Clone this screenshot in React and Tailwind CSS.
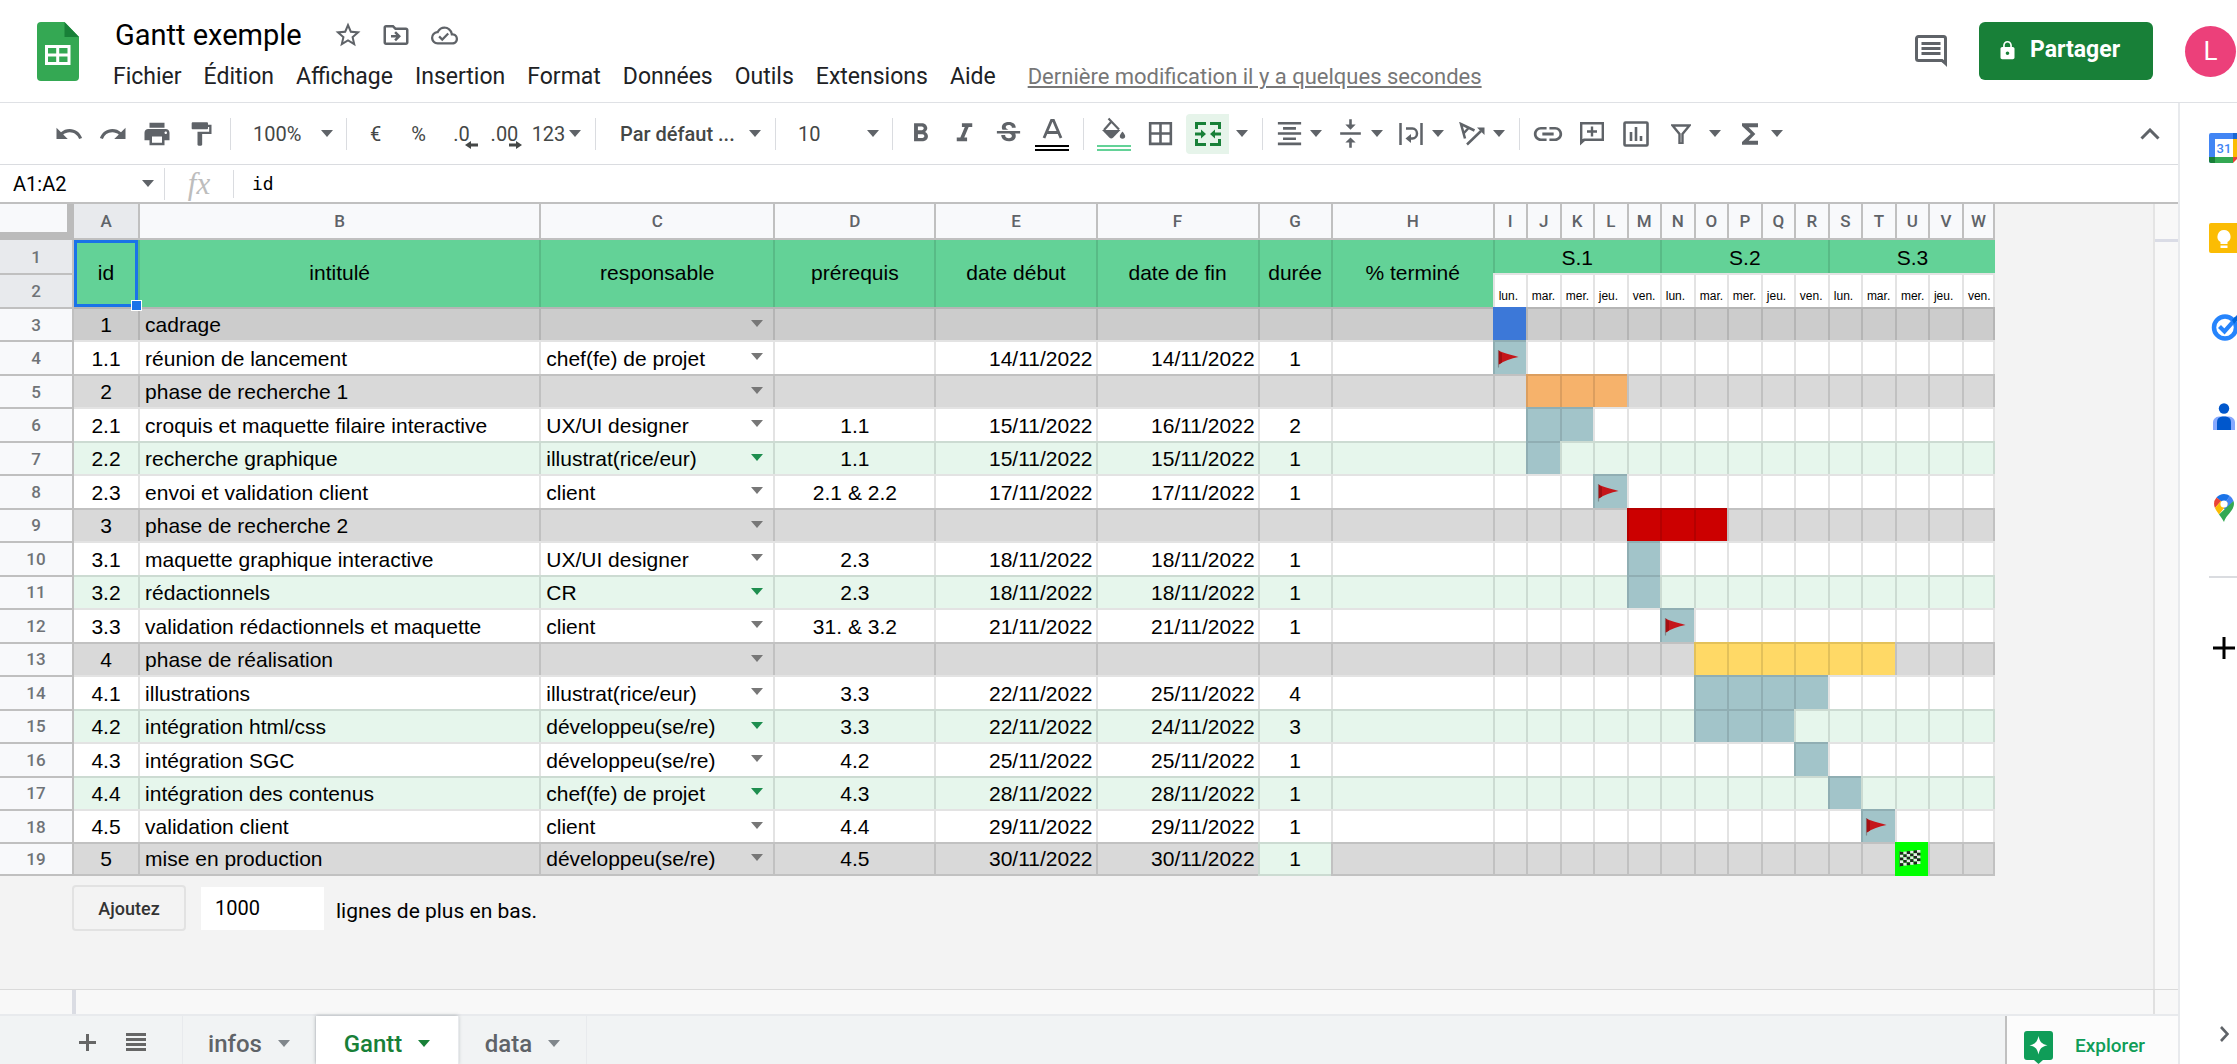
import React from "react";
import {
  MdUndo, MdRedo, MdPrint, MdFormatPaint, MdFormatBold, MdFormatItalic, MdStrikethroughS,
  MdBorderAll, MdFormatAlignCenter, MdVerticalAlignCenter, MdLink,
  MdFunctions, MdStarBorder, MdOutlineDriveFileMove, MdOutlineCloudDone, MdLock,
} from "react-icons/md";

const MENUS = ["Fichier", "Édition", "Affichage", "Insertion", "Format", "Données", "Outils", "Extensions", "Aide"];
const LETTERS = "ABCDEFGHIJKLMNOPQRSTUVW".split("");
const DAYS = ["lun.", "mar.", "mer.", "jeu.", "ven."];
const HEADINGS = ["intitulé", "responsable", "prérequis", "date début", "date de fin", "durée", "% terminé"];

const T = "bg-[#a2c4c9]";
// k: p = phase, w = white, g = banded green ; bar = [first day, length, colour, marker]
const ROWS = [
  { k: "p3", c: ["1", "cadrage", "", "", "", "", ""], bar: [0, 1, "bg-[#3c78d8]"] },
  { k: "w", c: ["1.1", "réunion de lancement", "chef(fe) de projet", "", "14/11/2022", "14/11/2022", "1"], bar: [0, 1, T, "flag"] },
  { k: "p", c: ["2", "phase de recherche 1", "", "", "", "", ""], bar: [1, 3, "bg-[#f6b26b]"] },
  { k: "w", c: ["2.1", "croquis et maquette filaire interactive", "UX/UI designer", "1.1", "15/11/2022", "16/11/2022", "2"], bar: [1, 2, T] },
  { k: "g", c: ["2.2", "recherche graphique", "illustrat(rice/eur)", "1.1", "15/11/2022", "15/11/2022", "1"], bar: [1, 1, T] },
  { k: "w", c: ["2.3", "envoi et validation client", "client", "2.1 & 2.2", "17/11/2022", "17/11/2022", "1"], bar: [3, 1, T, "flag"] },
  { k: "p", c: ["3", "phase de recherche 2", "", "", "", "", ""], bar: [4, 3, "bg-[#cc0000]"] },
  { k: "w", c: ["3.1", "maquette graphique interactive", "UX/UI designer", "2.3", "18/11/2022", "18/11/2022", "1"], bar: [4, 1, T] },
  { k: "g", c: ["3.2", "rédactionnels", "CR", "2.3", "18/11/2022", "18/11/2022", "1"], bar: [4, 1, T] },
  { k: "w", c: ["3.3", "validation rédactionnels et maquette", "client", "31. & 3.2", "21/11/2022", "21/11/2022", "1"], bar: [5, 1, T, "flag"] },
  { k: "p", c: ["4", "phase de réalisation", "", "", "", "", ""], bar: [6, 6, "bg-[#ffd966]"] },
  { k: "w", c: ["4.1", "illustrations", "illustrat(rice/eur)", "3.3", "22/11/2022", "25/11/2022", "4"], bar: [6, 4, T] },
  { k: "g", c: ["4.2", "intégration html/css", "développeu(se/re)", "3.3", "22/11/2022", "24/11/2022", "3"], bar: [6, 3, T] },
  { k: "w", c: ["4.3", "intégration SGC", "développeu(se/re)", "4.2", "25/11/2022", "25/11/2022", "1"], bar: [9, 1, T] },
  { k: "g", c: ["4.4", "intégration des contenus", "chef(fe) de projet", "4.3", "28/11/2022", "28/11/2022", "1"], bar: [10, 1, T] },
  { k: "w", c: ["4.5", "validation client", "client", "4.4", "29/11/2022", "29/11/2022", "1"], bar: [11, 1, T, "flag"] },
  { k: "p", c: ["5", "mise en production", "développeu(se/re)", "4.5", "30/11/2022", "30/11/2022", "1"], bar: [12, 1, "bg-[#00ff00]", "finish"] },
];
const BG = { p3: "bg-[#cccccc]", p: "bg-[#d9d9d9]", w: "bg-white", g: "bg-[#e6f6ec]" };

function Caret({ className = "text-[#5f6368]" }) {
  return (
    <svg viewBox="0 0 12 7" className={"h-[7px] w-3 shrink-0 " + className} fill="currentColor" aria-hidden="true">
      <path d="M0 0h12L6 7z" />
    </svg>
  );
}

function Sep({ className = "" }) {
  return <div className={"h-8 w-px shrink-0 bg-[#dadce0] " + className} />;
}

function Tool({ label, w = "w-11", children }) {
  return (
    <button type="button" aria-label={label} className={"flex h-10 shrink-0 items-center justify-center " + w}>
      {children}
    </button>
  );
}

function IconWithCaret({ label, children }) {
  return (
    <div className="mr-[7px] flex shrink-0">
      <Tool label={label} w="w-[34px]">{children}</Tool>
      <Tool label={label + " : options"} w="w-5"><Caret /></Tool>
    </div>
  );
}

function Decimal({ text, right }) {
  return (
    <span className="relative">
      {text}
      <svg viewBox="0 0 13 8" className={"absolute top-[22px] h-2 w-[13px] " + (right ? "-right-1" : "-right-2")} fill="currentColor">
        {right ? <path d="M0 2.500h7V0l6 4-6 4V5.500H0z" /> : <path d="M13 2.500H6V0L0 4l6 4V5.500h7z" />}
      </svg>
    </span>
  );
}

function Flag() {
  return (
    <svg viewBox="0 0 22 19" className="h-[19px] w-[22px]" aria-label="drapeau rouge">
      <path d="M1.500 1v17.500" stroke="#7d8b8d" strokeWidth="1.200" />
      <path d="M1.800 1.500C6 4.500 13 5 21.500 8 14 9.500 7 12 1.800 15.500z" fill="#c5161a" />
      <path d="M1.800 1.500C3 3 4 4 5 4.300v9.200L1.800 15.500z" fill="#a30f12" />
    </svg>
  );
}

function Finish() {
  const cells = [];
  for (let r = 0; r < 5; r++) {
    for (let c = 0; c < 6; c++) {
      cells.push(
        <rect key={r + "-" + c} x={1 + c * 3.4} y={3 + r * 2.8 - c * 0.4} width="3.400" height="2.800" fill={(r + c) % 2 ? "#e8e8e8" : "#222"} />
      );
    }
  }
  return (
    <svg viewBox="0 0 22 19" className="h-[19px] w-[22px]" aria-label="drapeau à damier">
      <path d="M1 2v16" stroke="#555" strokeWidth="1" />
      {cells}
    </svg>
  );
}

function Header() {
  return (
    <header className="flex h-[103px] items-start border-b border-[#dfe1e5] bg-white">
      <svg viewBox="0 0 42 59" className="mt-[22px] ml-[37px] h-[59px] w-[42px] shrink-0" aria-label="Sheets">
        <path d="M4 0h23.500L42 15v40a4 4 0 0 1-4 4H4a4 4 0 0 1-4-4V4a4 4 0 0 1 4-4z" fill="#34a853" />
        <path d="M27.500 0L42 15H27.500z" fill="#188038" />
        <path d="M8 23h25.500v20H8zM11 26v5.500h8.200V26zm11.200 0v5.500h8.300V26zM11 34.500V40h8.200v-5.500zm11.200 0V40h8.300v-5.500z" fill="#fff" fillRule="evenodd" />
      </svg>
      <div className="ml-[34px] shrink-0 pt-[15px]">
        <div className="flex h-10 items-center">
          <h1 className="pl-[2px] text-[29px] leading-10 text-black">Gantt exemple</h1>
          <div className="ml-[31px] flex items-center gap-[18px] text-[30px] text-[#5f6368]">
            <button type="button" aria-label="Suivre"><MdStarBorder /></button>
            <button type="button" aria-label="Déplacer"><MdOutlineDriveFileMove /></button>
            <button type="button" aria-label="État du document" className="ml-[2px] text-[27px]"><MdOutlineCloudDone /></button>
          </div>
        </div>
        <nav className="mt-[8px] flex items-center gap-[22px] text-[23px] leading-7 text-[#202124]">
          {MENUS.map((m) => <button type="button" key={m}>{m}</button>)}
          <a href="#historique" className="ml-[10px] text-[22px] text-[#777] underline underline-offset-2">Dernière modification il y a quelques secondes</a>
        </nav>
      </div>
      <div className="mt-[22px] ml-auto flex shrink-0 items-center">
        <button type="button" aria-label="Commentaires" className="mr-8 text-[#5f6368]">
          <svg viewBox="0 0 32 32" className="h-8 w-8" fill="none" stroke="currentColor" strokeWidth="3">
            <path d="M30.500 28V3.500a2 2 0 0 0-2-2h-25a2 2 0 0 0-2 2v20a2 2 0 0 0 2 2H27z" />
            <path d="M26 26h6v6z" fill="currentColor" stroke="none" />
            <path d="M6.500 8.500h19M6.500 13.500h19M6.500 18.500h19" />
          </svg>
        </button>
        <button type="button" className="flex h-[58px] w-[174px] items-center rounded-md bg-[#188038] pb-[2px] pl-[18px] text-[23px] font-bold text-white">
          <MdLock className="mr-[9px] text-[21px]" />
          <span className="pl-[3px]">Partager</span>
        </button>
        <button type="button" aria-label="Compte" className="mr-px ml-8 h-[51px] w-[51px] rounded-full bg-[#ec407a] text-[26px] text-white">L</button>
      </div>
    </header>
  );
}

function Toolbar() {
  return (
    <div role="toolbar" className="flex h-[62px] items-center border-b border-[#dadce0] pr-3 pl-[47px] text-[20px] text-[#444746]">
      <div className="flex shrink-0 text-[30px] text-[#5f6368]">
        <Tool label="Annuler"><MdUndo /></Tool>
        <Tool label="Rétablir"><MdRedo /></Tool>
        <Tool label="Imprimer"><MdPrint /></Tool>
        <Tool label="Copier la mise en forme"><MdFormatPaint className="text-[28px]" /></Tool>
      </div>
      <Sep className="ml-[7px]" />
      <button type="button" className="flex w-[115px] shrink-0 items-center justify-between pr-[13px] pl-[22px]">100%<Caret /></button>
      <Sep className="mr-[7px]" />
      <Tool label="Format monétaire" w="w-[43px]">€</Tool>
      <Tool label="Pourcentage" w="w-[43px]">%</Tool>
      <Tool label="Réduire les décimales" w="w-[43px]"><Decimal text=".0" /></Tool>
      <Tool label="Ajouter des décimales" w="w-[43px]"><Decimal text=".00" right /></Tool>
      <Tool label="Autres formats" w="w-[61px]"><span className="mr-1">123</span><Caret /></Tool>
      <Sep className="ml-2" />
      <button type="button" className="flex w-[179px] shrink-0 items-center justify-between pr-[14px] pl-6 font-medium">Par défaut ...<Caret /></button>
      <Sep />
      <div className="flex w-[116px] shrink-0 items-center pr-[13px] pl-[22px]">
        <input aria-label="Taille de police" defaultValue="10" className="w-full min-w-0 bg-transparent" />
        <Caret />
      </div>
      <Sep className="mr-[5px]" />
      <div className="flex shrink-0 text-[31px] text-[#5f6368]">
        <Tool label="Gras"><MdFormatBold /></Tool>
        <Tool label="Italique"><MdFormatItalic /></Tool>
        <Tool label="Barré"><MdStrikethroughS /></Tool>
        <Tool label="Couleur du texte">
          <svg viewBox="0 0 34 34" className="h-[34px] w-[34px]" fill="none">
            <path d="M9 21L16.500 3.500h2L26 21M11.500 15.500h12" stroke="currentColor" strokeWidth="2.800" />
            <path d="M0 29h34M0 33h34" stroke="#000" strokeWidth="2" />
          </svg>
        </Tool>
      </div>
      <Sep className="mr-2 ml-[9px]" />
      <div className="flex shrink-0 items-center text-[31px] text-[#5f6368]">
        <Tool label="Couleur de remplissage">
          <svg viewBox="0 0 34 34" className="h-[34px] w-[34px]">
            <path d="M11.500 1.500L22 12.500M14.500 4.500L7 13" stroke="currentColor" strokeWidth="2.200" fill="none" />
            <path d="M5 13h18.500l-7.500 7.800c-1 1-2.500 1-3.500 0z" fill="currentColor" />
            <path d="M25.500 14.500s-2.700 3-2.700 4.600a2.700 2.700 0 0 0 5.400 0c0-1.600-2.700-4.600-2.700-4.600z" fill="currentColor" />
            <path d="M0 29h34M0 33h34" stroke="#63d297" strokeWidth="2" />
          </svg>
        </Tool>
        <Tool label="Bordures" w="w-[48px]"><MdBorderAll /></Tool>
        <button type="button" aria-label="Fusionner les cellules" className="ml-[2px] flex h-10 w-[43px] items-center justify-center rounded-l bg-[#e6f4ea] text-[#188038]">
          <svg viewBox="0 0 26 24" className="h-6 w-[26px]" fill="none" stroke="currentColor" strokeWidth="3">
            <path d="M1.500 7V1.500H11M15 1.500h9.500V7M1.500 17v5.500H11M15 22.500h9.500V17M0 12h6M26 12h-6" />
            <path d="M6 7.500l5 4.500-5 4.500zM20 7.500L15 12l5 4.500z" fill="currentColor" stroke="none" />
          </svg>
        </button>
        <Tool label="Options de fusion" w="w-[26px]"><Caret /></Tool>
      </div>
      <Sep className="mr-[9px] ml-[7px]" />
      <div className="flex shrink-0 text-[31px] text-[#5f6368]">
        <IconWithCaret label="Alignement horizontal"><MdFormatAlignCenter /></IconWithCaret>
        <IconWithCaret label="Alignement vertical"><MdVerticalAlignCenter /></IconWithCaret>
        <IconWithCaret label="Retour à la ligne">
          <svg viewBox="0 0 24 24" className="h-6 w-6" fill="none" stroke="currentColor" strokeWidth="2.500">
            <path d="M1.500 1v22M22.500 1v22M7 6.500h6.500a4.500 5 0 0 1 0 10H11" />
            <path d="M12 12v9l-5.500-4.500z" fill="currentColor" stroke="none" />
          </svg>
        </IconWithCaret>
        <IconWithCaret label="Rotation du texte">
          <svg viewBox="0 0 28 24" className="h-6 w-7" fill="none" stroke="currentColor" strokeWidth="2.500">
            <path d="M7 16.500L3 2l13.500 6.500M5.500 11.500L11 5.500M9 22.500L23 9" />
            <path d="M19 5.500h7.500V13z" fill="currentColor" stroke="none" />
          </svg>
        </IconWithCaret>
      </div>
      <Sep className="mr-[6px] ml-[3px]" />
      <div className="flex shrink-0 text-[34px] text-[#5f6368]">
        <Tool label="Insérer un lien"><MdLink /></Tool>
        <Tool label="Insérer un commentaire">
          <svg viewBox="0 0 24 24" className="h-6 w-6" fill="none" stroke="currentColor" strokeWidth="2.400">
            <path d="M1.200 20V1.200h21.600v16.500H4zM12 4.500v10M7 9.500h10" />
            <path d="M0 17h7l-7 6.500z" fill="currentColor" stroke="none" />
          </svg>
        </Tool>
        <Tool label="Insérer un graphique">
          <svg viewBox="0 0 26 26" className="h-[26px] w-[26px]" fill="none" stroke="currentColor" strokeWidth="2.600">
            <rect x="1.500" y="1.500" width="23" height="23" rx="1" />
            <path d="M8 11v9M13 6v14M18 15v5" />
          </svg>
        </Tool>
        <Tool label="Filtre" w="w-[46px]">
          <svg viewBox="0 0 20 20" className="h-5 w-5" fill="none" stroke="currentColor" strokeWidth="2.400">
            <path d="M1.500 1.500h17L11.500 10v9.500h-3V10z" />
          </svg>
        </Tool>
        <Tool label="Vues filtrées" w="w-[22px]"><Caret /></Tool>
        <div className="ml-2 flex text-[32px]">
          <Tool label="Fonctions" w="w-8"><MdFunctions /></Tool>
          <Tool label="Liste des fonctions" w="w-[22px]"><Caret /></Tool>
        </div>
      </div>
      <button type="button" aria-label="Masquer les menus" className="ml-auto flex h-10 w-8 items-center justify-center text-[#5f6368]">
        <svg viewBox="0 0 20 12" className="h-3 w-5" fill="none" stroke="currentColor" strokeWidth="3">
          <path d="M1.500 10.500L10 2l8.500 8.500" />
        </svg>
      </button>
    </div>
  );
}

function FormulaBar() {
  return (
    <div className="flex h-[39px] items-center border-b-2 border-[#c0c0c0] text-[20px] text-black">
      <input aria-label="Zone de nom" defaultValue="A1:A2" className="w-[129px] pl-[13px]" />
      <button type="button" aria-label="Plages" className="flex w-[35px] items-center justify-center pr-[10px] pl-[13px]"><Caret /></button>
      <div className="h-8 w-px bg-[#dadce0]" />
      <span className="w-[68px] text-center font-['Liberation_Serif',serif] text-[31px] leading-8 text-[#bdbdbd] italic">fx</span>
      <div className="h-7 w-px bg-[#dadce0]" />
      <input aria-label="Formule" defaultValue="id" className="min-w-0 flex-1 pl-[18px] font-['DejaVu_Sans_Mono',monospace] text-[18px]" />
    </div>
  );
}

const LINE = "border-t-2 border-l-2 border-black/11";

function RowNumber({ n }) {
  return (
    <th
      scope="row"
      className={
        "h-[33px] border-r-2 border-[#c0c0c0] p-0 font-['Roboto',sans-serif] text-[17px] font-medium text-[#6f7377] " +
        (n > 1 ? "border-t-2 " : "") + (n === 19 ? "border-b-2 " : "") + (n < 3 ? "bg-[#e8eaed]" : "bg-[#f8f9fb]")
      }
    >
      {n}
    </th>
  );
}

function Sheet() {
  return (
    <table className="h-[672px] w-[1995px] table-fixed border-separate border-spacing-0 font-['Liberation_Sans',Arial,sans-serif] text-[21px] leading-6 text-black">
      <colgroup>
        <col className="w-[74px]" />
        <col className="w-[64px]" />
        <col className="w-[401px]" />
        <col className="w-[234px]" />
        <col className="w-[161px]" />
        <col className="w-[161px]" />
        <col className="w-[162px]" />
        <col className="w-[73px]" />
        <col className="w-[162px]" />
        {DAYS.concat(DAYS, DAYS).map((_, i) => <col key={i} className={i % 2 ? "w-[34px]" : "w-[33px]"} />)}
      </colgroup>
      <thead className="font-['Roboto',sans-serif] text-[17px] text-[#5f6368]">
        <tr>
          <th aria-label="Tout sélectionner" className="h-9 border-r-[7px] border-b-8 border-[#bbbbbb] bg-[#f8f9fb] p-0" />
          {LETTERS.map((l, i) => (
            <th key={l} scope="col" className={"border-b-2 border-[#c0c0c0] p-0 font-medium " + (i === 0 ? "bg-[#e8eaed] " : "border-l-2 bg-[#f8f9fb] ") + (i === 22 ? "border-r-2" : "")}>{l}</th>
          ))}
        </tr>
      </thead>
      <tbody>
        <tr>
          <RowNumber n={1} />
          <th rowSpan={2} className="relative bg-[#63d297] p-0 font-normal">
            id
            <span className="absolute inset-0 border-3 border-[#1a73e8]" />
            <span className="absolute -right-1 -bottom-1 h-[11px] w-[11px] border border-white bg-[#1a73e8]" />
          </th>
          {HEADINGS.map((h) => (
            <th key={h} rowSpan={2} className="border-l-2 border-black/11 bg-[#63d297] p-0 font-normal">{h}</th>
          ))}
          {["S.1", "S.2", "S.3"].map((s) => (
            <th key={s} colSpan={5} className="border-l-2 border-black/11 bg-[#63d297] p-0 pb-[3px] align-bottom font-normal">{s}</th>
          ))}
        </tr>
        <tr>
          <RowNumber n={2} />
          {DAYS.concat(DAYS, DAYS).map((d, i) => (
            <td key={i} className={"overflow-hidden bg-white p-0 pb-1 pl-1 align-bottom text-[12px] leading-[14px] " + LINE + (i === 14 ? " border-r-2" : "")}>{d}</td>
          ))}
        </tr>
        {ROWS.map((row, r) => {
          const bg = BG[row.k];
          const last = r === ROWS.length - 1;
          const cell = LINE + " p-0 pb-[3px] align-bottom whitespace-nowrap " + (last ? "border-b-2 " : "");
          const [id, title, who, pre, start, end, len] = row.c;
          const [first, count, color, mark] = row.bar;
          return (
            <tr key={id}>
              <RowNumber n={r + 3} />
              <td className={"border-t-2 border-black/11 p-0 pb-[3px] text-center align-bottom " + (last ? "border-b-2 " : "") + bg}>{id}</td>
              <td className={cell + bg}><div className="pl-[5px]">{title}</div></td>
              <td className={cell + bg}>
                <div className="flex h-6 items-center justify-between pr-[10px] pl-[5px]">
                  <span>{who}</span>
                  <button type="button" aria-label={"Choisir le responsable, ligne " + (r + 3)} className="flex h-5 items-center self-start">
                    <Caret className={row.k === "g" ? "text-[#1e8e4f]" : "text-[#777]"} />
                  </button>
                </div>
              </td>
              <td className={cell + "text-center " + bg}>{pre}</td>
              <td className={cell + "text-right " + bg}><div className="pr-[3px]">{start}</div></td>
              <td className={cell + "text-right " + bg}><div className="pr-[3px]">{end}</div></td>
              <td className={cell + "text-center " + (last ? "bg-[#e6f6ec]" : bg)}>{len}</td>
              <td className={cell + bg} />
              {Array.from({ length: 15 }, (_, d) => {
                const on = d >= first && d < first + count;
                const plain = on && (r === 0 || last);
                return (
                  <td
                    key={d}
                    className={
                      "p-0 pb-[3px] align-bottom border-t-2 border-l-2 " + (plain ? "border-transparent " : "border-black/11 ") +
                      (last ? "border-b-2 " : "") + (on ? color : bg) + (d === 14 ? " border-r-2" : "")
                    }
                  >
                    {on && mark === "flag" && <div className="pb-[3px] pl-[2px]"><Flag /></div>}
                    {on && mark === "finish" && <div className="pb-[3px] pl-[2px]"><Finish /></div>}
                  </td>
                );
              })}
            </tr>
          );
        })}
      </tbody>
    </table>
  );
}

function SheetTab({ name, active, w }) {
  return (
    <button
      type="button"
      role="tab"
      aria-selected={!!active}
      className={"flex items-center justify-center gap-4 pt-2 text-[24px] font-medium " + w + (active ? " bg-white text-[#188038] shadow-[0_0_4px_rgba(60,64,67,0.4)]" : " border-x border-[#e8eaed] text-[#5f6368]")}
    >
      {name}
      <Caret className={"mb-[2px] " + (active ? "text-[#188038]" : "text-[#80868b]")} />
    </button>
  );
}

function Footer() {
  return (
    <footer className="flex h-[50px] items-stretch border-t-2 border-[#e8eaed] bg-[#f1f3f4]">
      <button type="button" aria-label="Ajouter une feuille" className="ml-[71px] flex w-8 items-center justify-center pt-1 text-[#666]">
        <svg viewBox="0 0 17 17" className="h-[17px] w-[17px]" stroke="currentColor" strokeWidth="3"><path d="M0 8.500h17M8.500 0v17" /></svg>
      </button>
      <button type="button" aria-label="Toutes les feuilles" className="ml-[17px] flex w-8 items-center justify-center pt-1 text-[#666]">
        <svg viewBox="0 0 20 18" className="h-[18px] w-5" stroke="currentColor" strokeWidth="3"><path d="M0 1.500h20M0 6.500h20M0 11.500h20M0 16.500h20" /></svg>
      </button>
      <div role="tablist" className="ml-[30px] flex">
        <SheetTab name="infos" w="w-[134px]" />
        <SheetTab name="Gantt" active w="w-[142px]" />
        <SheetTab name="data" w="w-[129px]" />
      </div>
      <button type="button" className="ml-auto flex w-[173px] items-center border-l-2 border-[#c0c0c0] bg-[#fcfcfc] pl-[17px] text-[19px] font-medium text-[#0f9d58]">
        <svg viewBox="0 0 29 33" className="mt-[14px] h-[33px] w-[29px]">
          <path d="M3 0h23a3 3 0 0 1 3 3v23a3 3 0 0 1-3 3h-7l-4.500 4-4.500-4H3a3 3 0 0 1-3-3V3a3 3 0 0 1 3-3z" fill="#0f9d58" />
          <path d="M14.500 5c1.300 6 3.200 8 9 9.300-5.800 1.300-7.700 3.200-9 9.200-1.300-6-3.200-7.900-9-9.200C11.300 13 13.200 11 14.500 5z" fill="#fff" />
        </svg>
        <span className="mt-3 ml-[22px]">Explorer</span>
      </button>
    </footer>
  );
}

function SidePanel() {
  return (
    <aside className="flex w-[59px] shrink-0 flex-col overflow-hidden border-l-2 border-[#e8eaed] bg-white pt-[30px] pl-[29px]">
      <button type="button" aria-label="Agenda" className="h-[30px] w-[30px]">
        <svg viewBox="0 0 30 30" className="h-[30px] w-[30px]">
          <path d="M2 0h22v6H6v24H2a2 2 0 0 1-2-2V2a2 2 0 0 1 2-2z" fill="#4285f4" />
          <path d="M24 0h4a2 2 0 0 1 2 2v4h-6z" fill="#1967d2" />
          <path d="M24 6h6v18h-6z" fill="#fbbc04" />
          <path d="M6 24h18v6H6z" fill="#34a853" />
          <path d="M0 24h6v6H2a2 2 0 0 1-2-2z" fill="#188038" />
          <path d="M24 24h6l-6 6z" fill="#ea4335" />
          <path d="M6 6h18v18H6z" fill="#fff" />
          <text x="15" y="20" textAnchor="middle" fontSize="13" fontWeight="500" fontFamily="Roboto" fill="#4285f4">31</text>
        </svg>
      </button>
      <button type="button" aria-label="Keep" className="mt-[60px] h-[30px] w-[30px]">
        <svg viewBox="0 0 30 30" className="h-[30px] w-[30px]">
          <rect width="30" height="30" rx="2" fill="#fbbc04" />
          <path d="M15 7a6.500 6.500 0 0 0-3.500 12v2h7v-2A6.500 6.500 0 0 0 15 7zM11.500 22.500h7V25h-7z" fill="#fff" />
        </svg>
      </button>
      <button type="button" aria-label="Tasks" className="mt-[60px] ml-[2px] h-7 w-7">
        <svg viewBox="0 0 28 28" className="h-7 w-7" fill="none">
          <circle cx="14" cy="14.500" r="11" stroke="#2684fc" strokeWidth="4.500" />
          <path d="M8.500 13.500l5 5L25 5.500" stroke="#2684fc" strokeWidth="4.200" />
          <path d="M21 7l5-5 2 3-5 6z" fill="#0066da" />
        </svg>
      </button>
      <button type="button" aria-label="Contacts" className="mt-[62px] ml-1 h-7 w-[22px]">
        <svg viewBox="0 0 22 28" className="h-7 w-[22px]">
          <circle cx="11" cy="5.500" r="5.200" fill="#0057cc" />
          <path d="M0 27V20a6 6 0 0 1 6-6.500h10a6 6 0 0 1 6 6.500v7z" fill="#86a9ff" />
          <path d="M4 27v-8a5.500 5.500 0 0 1 5.500-5.500h3A5.500 5.500 0 0 1 18 19v8z" fill="#0057cc" />
        </svg>
      </button>
      <button type="button" aria-label="Maps" className="mt-[63px] ml-[5px] h-7 w-5">
        <svg viewBox="0 0 20 28" className="h-7 w-5">
          <path d="M10 0a10 10 0 0 0-7.500 3.500L10 10l6-8A10 10 0 0 0 10 0z" fill="#1a73e8" />
          <path d="M2.500 3.500A10 10 0 0 0 1 14l6-7z" fill="#ea4335" />
          <path d="M16 2L7 13l5 3 7.500-9A10 10 0 0 0 16 2z" fill="#4285f4" />
          <path d="M1 14c1 2.500 2.500 4 4 6.500L14 9 7 7z" fill="#fbbc04" />
          <path d="M5 20.500C7.500 24 9 26 10 28c1.500-5 4.500-7 7.500-11.500C20 13 20.500 9.500 19.500 7z" fill="#34a853" />
          <circle cx="10" cy="10" r="3.600" fill="#fff" />
        </svg>
      </button>
      <hr className="mt-[54px] border-t-2 border-[#dadce0]" />
      <button type="button" aria-label="Modules complémentaires" className="mt-[59px] ml-1 h-[22px] w-[22px]">
        <svg viewBox="0 0 22 22" className="h-[22px] w-[22px]" stroke="#000" strokeWidth="3"><path d="M0 11h22M11 0v22" /></svg>
      </button>
      <button type="button" aria-label="Masquer le panneau" className="mt-auto mb-[22px] ml-[11px] h-4 w-[9px] text-[#5f6368]">
        <svg viewBox="0 0 9 16" className="h-4 w-[9px]" fill="none" stroke="currentColor" strokeWidth="2.600"><path d="M1 1l6.500 7L1 15" /></svg>
      </button>
    </aside>
  );
}

export default function App() {
  return (
    <div className="flex min-h-screen flex-col overflow-hidden bg-white font-['Roboto',sans-serif]">
      <Header />
      <div className="flex flex-1">
        <main className="flex min-w-0 flex-1 flex-col">
          <Toolbar />
          <FormulaBar />
          <div className="flex flex-1 bg-[#f3f3f3]">
            <div className="min-w-0 flex-1 overflow-hidden">
              <Sheet />
              <form className="mt-[9px] flex items-center pl-[72px]">
                <button type="button" className="h-[46px] w-[114px] rounded-sm border-2 border-[#e2e2e2] bg-[#f3f3f3] text-[18px] font-medium text-[#333]">Ajoutez</button>
                <input id="rows" defaultValue="1000" className="ml-[15px] h-[43px] w-[123px] bg-white pl-[14px] text-[20px] text-black" />
                <label htmlFor="rows" className="mt-2 ml-3 text-[21px] text-black">lignes de plus en bas.</label>
              </form>
            </div>
            <div className="w-[25px] shrink-0 border-l-2 border-[#e4e4e4] bg-[#f8f8f8]">
              <div className="h-[38px] border-b-3 border-[#dadce6]" />
            </div>
          </div>
          <div className="flex h-[25px] border-t border-[#dadada] bg-[#f8f8f8]">
            <div className="ml-[72px] w-1 bg-[#dadce3]" />
            <div className="ml-auto w-[25px] border-l-2 border-[#e0e0e0]" />
          </div>
          <Footer />
        </main>
        <SidePanel />
      </div>
    </div>
  );
}
